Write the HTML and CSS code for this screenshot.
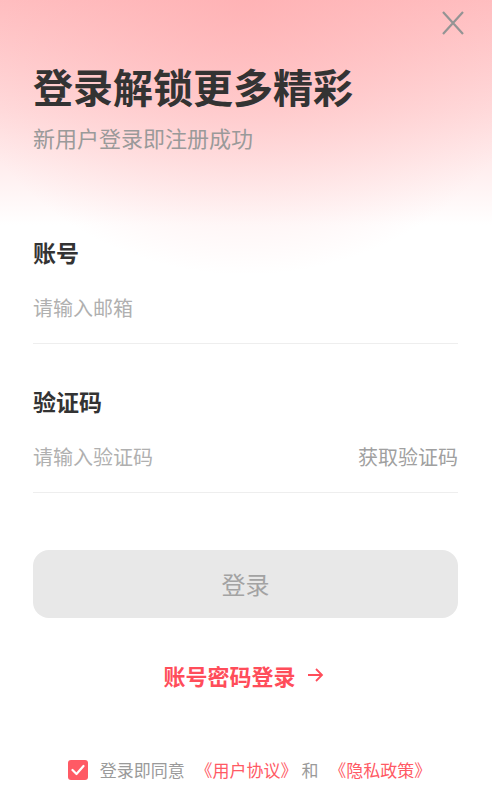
FILE: index.html
```html
<!DOCTYPE html>
<html lang="zh-CN">
<head>
	<meta charset="utf-8" />
	<title>登录</title>
	<link rel="stylesheet" href="styles.css">
</head>
<body>
	<div class="page">
		<div class="topbar">
			<button class="close" aria-label="关闭">
				<svg width="22" height="24" viewBox="0 0 22 24">
					<path d="M1 1 L21 23 M21 1 L1 23" stroke="#949494" stroke-width="2.2" fill="none" />
				</svg>
			</button>
		</div>

		<h1 class="title">登录解锁更多精彩</h1>
		<p class="subtitle">新用户登录即注册成功</p>

		<div class="group">
			<div class="label">账号</div>
			<div class="field">
				<input type="text" placeholder="请输入邮箱">
			</div>
		</div>

		<div class="group">
			<div class="label">验证码</div>
			<div class="field">
				<input type="text" placeholder="请输入验证码">
				<span class="getcode">获取验证码</span>
			</div>
		</div>

		<button class="submit">登录</button>

		<div class="switch">
			<span>账号密码登录</span>
			<svg width="17" height="16" viewBox="0 0 17 16">
				<path d="M1 8 H15 M9 2 L15 8 L9 14" stroke="#ff4d5a" stroke-width="1.8" fill="none" />
			</svg>
		</div>

		<div class="agree">
			<span class="check">
				<svg width="14" height="12" viewBox="0 0 14 12">
					<path d="M1.5 6 L5.5 10 L12.5 2" stroke="#fff" stroke-width="2.2" fill="none" stroke-linecap="round" stroke-linejoin="round" />
				</svg>
			</span>
			<span class="agree-text">登录即同意 <a href="#">《用户协议》</a> 和 <a href="#">《隐私政策》</a></span>
		</div>
	</div>
</body>
</html>
```

FILE: styles.css
```css
body
{
	margin: 0;
	font-family: "Noto Sans CJK SC", "Noto Sans", sans-serif;
	background-color: #fff;
	color: #333;
}

.page
{
	min-height: 797px;
	padding: 0 34px 0 33px;
	background-image:
		radial-gradient(ellipse 62% 275px at 50% 0, rgba(255, 168, 171, 0.55), rgba(255, 168, 171, 0) 100%),
		linear-gradient(to bottom, #ffc0c2 0, #ffdcdd 110px, #fff 225px);
	background-repeat: no-repeat;
	background-size: 100% 280px;
	box-sizing: border-box;
}

.topbar
{
	height: 46px;
	display: flex;
	justify-content: flex-end;
	align-items: center;
	margin-right: -6px;
}

.close
{
	background: none;
	border: none;
	padding: 0;
	width: 22px;
	height: 24px;
	cursor: pointer;
}

.title
{
	margin: 12px 0 0;
	font-size: 40px;
	line-height: 56px;
	font-weight: 700;
	color: #333;
}

.subtitle
{
	margin: 7px 0 0;
	font-size: 22px;
	line-height: 32px;
	color: #9a9a9a;
}

.group
{
	margin-top: 83px;
}

.group + .group
{
	margin-top: 41px;
}

.label
{
	font-size: 23px;
	line-height: 32px;
	font-weight: 700;
	color: #333;
}

.field
{
	display: flex;
	align-items: center;
	padding: 26px 0 21px;
	border-bottom: 1px solid #eeeeee;
}

.field input
{
	flex: 1;
	min-width: 0;
	border: none;
	outline: none;
	background: transparent;
	padding: 0;
	font-family: inherit;
	font-size: 20px;
	line-height: 28px;
	height: 28px;
	color: #333;
}

.field input::placeholder
{
	color: #b0b0b0;
}

.getcode
{
	font-size: 20px;
	line-height: 28px;
	color: #a0a0a0;
	cursor: pointer;
}

.submit
{
	display: block;
	width: 100%;
	height: 68px;
	margin-top: 57px;
	border: none;
	border-radius: 16px;
	background-color: #e8e8e8;
	color: #a3a3a3;
	font-family: inherit;
	font-size: 24px;
	padding: 0 0 2px;
}

.switch
{
	margin-top: 42px;
	display: flex;
	justify-content: center;
	align-items: center;
	gap: 11px;
	font-size: 22px;
	line-height: 30px;
	font-weight: 700;
	color: #ff4d5a;
	padding-right: 4px;
}

.agree
{
	margin-top: 66px;
	height: 28px;
	display: flex;
	justify-content: center;
	align-items: center;
	gap: 12px;
	margin-left: 8px;
}

.check
{
	width: 20px;
	height: 20px;
	border-radius: 3px;
	background-color: #ff5a65;
	display: flex;
	justify-content: center;
	align-items: center;
}

.agree-text
{
	font-size: 17px;
	line-height: 24px;
	color: #9a9a9a;
}

.agree-text a
{
	color: #ff5a65;
	text-decoration: none;
	margin-left: 7px;
}
```
